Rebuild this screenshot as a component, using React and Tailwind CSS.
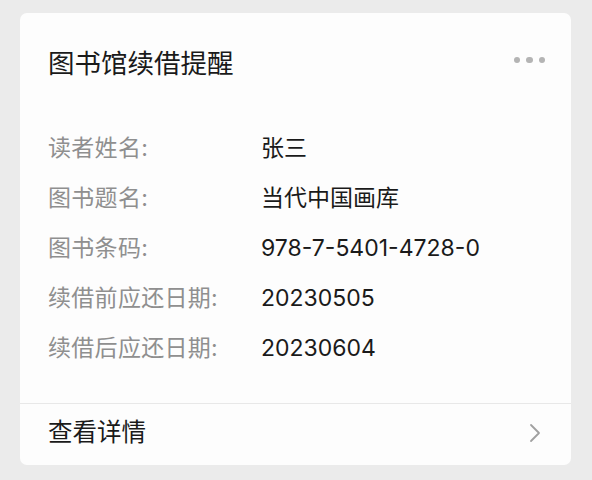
import React from "react";

const rows = [
  { label: "读者姓名:", value: "张三" },
  { label: "图书题名:", value: "当代中国画库" },
  { label: "图书条码:", value: "978-7-5401-4728-0" },
  { label: "续借前应还日期:", value: "20230505" },
  { label: "续借后应还日期:", value: "20230604" },
];

export default function App() {
  return (
    <div
      className="h-[480px] w-[592px] bg-[#ebebeb] pt-[13px] pl-[20px]"
      style={{ fontFamily: 'Inter, "Noto Sans CJK SC", sans-serif' }}
    >
      <div className="w-[551px] h-[452px] bg-[#fdfdfd] rounded-[7px] flex flex-col">
        {/* 标题 */}
        <div className="flex items-center justify-between pl-[28px] pr-[26px] pt-[33px] h-[67px]">
          <h1 className="text-[26.5px] leading-[32px] text-[#1a1a1a]">图书馆续借提醒</h1>
          <div className="flex gap-[6px] items-center -mt-[6px]">
            <span className="w-[6.5px] h-[6.5px] rounded-full bg-[#b4b4b4]" />
            <span className="w-[6.5px] h-[6.5px] rounded-full bg-[#b4b4b4]" />
            <span className="w-[6.5px] h-[6.5px] rounded-full bg-[#b4b4b4]" />
          </div>
        </div>

        {/* 信息 */}
        <div className="pl-[28px] pt-[43px] pb-[30px] border-b border-[#e8e8e8]">
          {rows.map((r) => (
            <div key={r.label} className="flex items-center h-[50px] text-[23px]">
              <span className="w-[213px] text-[#8f8f8f] tracking-[0.3px]">{r.label}</span>
              <span className="text-[#1a1a1a]">{r.value}</span>
            </div>
          ))}
        </div>

        {/* 底部 */}
        <div className="flex-1 flex items-center justify-between pl-[28px] pr-[30px] pb-[4px]">
          <span className="text-[24.5px] text-[#1a1a1a]">查看详情</span>
          <svg width="12" height="20" viewBox="0 0 12 20" fill="none">
            <path d="M2 2l8 8-8 8" stroke="#a0a0a0" strokeWidth="1.8" strokeLinecap="round" strokeLinejoin="round" />
          </svg>
        </div>
      </div>
    </div>
  );
}
